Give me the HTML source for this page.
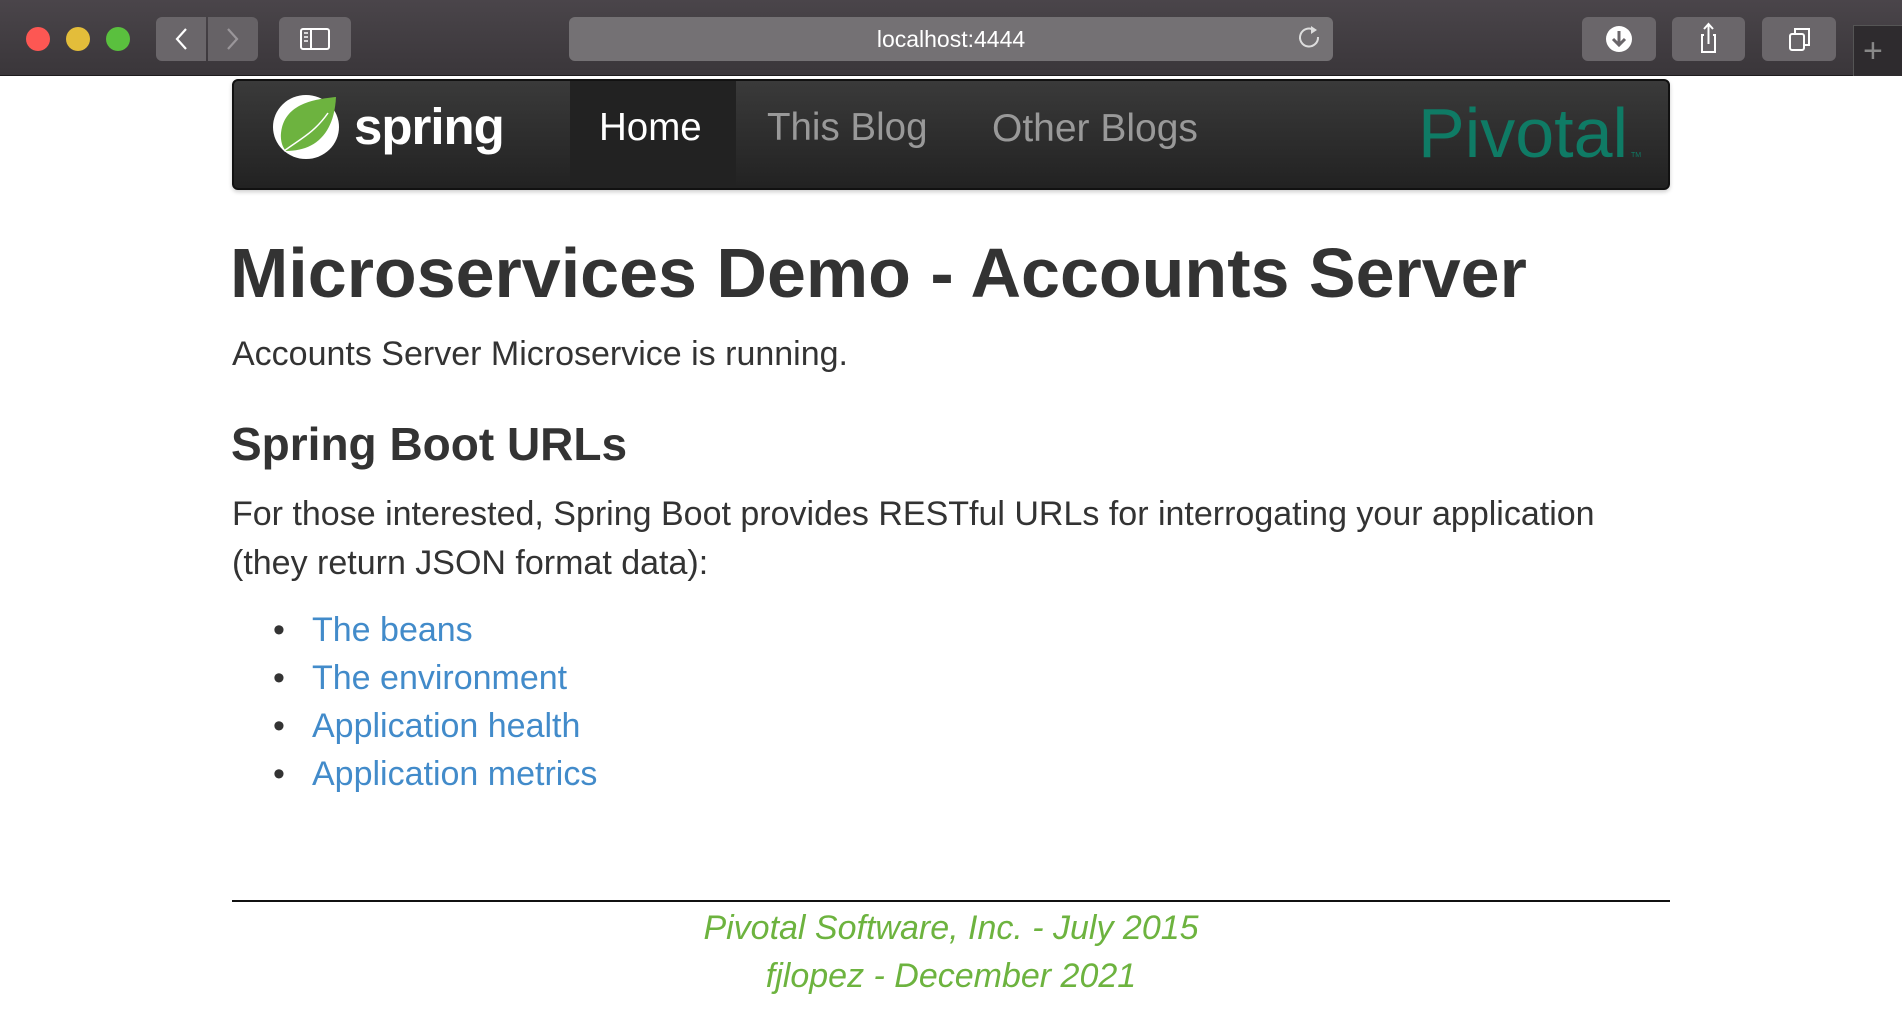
<!DOCTYPE html>
<html><head><meta charset="utf-8"><style>
*{margin:0;padding:0;box-sizing:border-box}
body{width:1902px;height:1014px;background:#fff;position:relative;overflow:hidden;font-family:"Liberation Sans",Arial,sans-serif;color:#333}
.a{position:absolute;white-space:nowrap;line-height:1}
.tb{position:absolute;left:0;top:0;width:1902px;height:76px;background:linear-gradient(#4a454a,#3a363a);border-bottom:1px solid #1e1c1e}
.dot{position:absolute;top:27px;width:24px;height:24px;border-radius:50%}
.btn{position:absolute;top:17px;height:44px;background:#6a666a;border-radius:6px}
.nav{position:absolute;left:232px;top:79px;width:1438px;height:111px;background:linear-gradient(#3a3a3a,#222);border:2px solid #111;border-radius:6px;box-shadow:0 2px 4px rgba(0,0,0,.2)}
.link{color:#428bca}
.foot{color:#6db33f;font-style:italic;font-size:34px;width:1902px;text-align:center;left:0}
</style></head><body>
<div class="tb">
  <div class="dot" style="left:26px;background:#fd5753"></div>
  <div class="dot" style="left:66px;background:#e3bd3a"></div>
  <div class="dot" style="left:106px;background:#5ac03e"></div>
  <div class="btn" style="left:156px;width:50px;border-radius:6px 0 0 6px"></div>
  <div class="btn" style="left:208px;width:50px;border-radius:0 6px 6px 0;background:#666266"></div>
  <svg class="a" style="left:156px;top:17px" width="102" height="44"><path d="M30 12 L21 22 L30 32" stroke="#fff" stroke-width="2.2" fill="none"/><path d="M72 12 L81 22 L72 32" stroke="#9a969a" stroke-width="2.2" fill="none"/></svg>
  <div class="btn" style="left:279px;width:72px"></div>
  <svg class="a" style="left:279px;top:17px" width="72" height="44"><rect x="22" y="12" width="28" height="20" rx="2" stroke="#fff" stroke-width="2" fill="none"/><line x1="32" y1="12" x2="32" y2="32" stroke="#fff" stroke-width="2"/><line x1="25" y1="16" x2="29" y2="16" stroke="#fff" stroke-width="1.5"/><line x1="25" y1="20" x2="29" y2="20" stroke="#fff" stroke-width="1.5"/><line x1="25" y1="24" x2="29" y2="24" stroke="#fff" stroke-width="1.5"/></svg>
  <div class="btn" style="left:569px;width:764px;background:#747174"></div>
  <div class="a" style="left:569px;width:764px;text-align:center;top:28px;font-size:23px;color:#fff">localhost:4444</div>
  <svg class="a" style="left:1295px;top:22px" width="30" height="30"><path d="M19 8 A9 9 0 1 0 23 15" stroke="#ddd" stroke-width="2" fill="none"/><path d="M16 4 L22 8 L16 12 Z" fill="#ddd"/></svg>
  <div class="btn" style="left:1582px;width:74px"></div>
  <svg class="a" style="left:1582px;top:17px" width="74" height="44"><circle cx="37" cy="22" r="13" fill="#fff"/><path d="M37 14 V28 M31 22 L37 28 L43 22" stroke="#6a666a" stroke-width="3" fill="none"/></svg>
  <div class="btn" style="left:1672px;width:73px"></div>
  <svg class="a" style="left:1672px;top:17px" width="73" height="44"><path d="M32 18 H30 V35 H43 V18 H41 M36.5 27 V8 M32 12 L36.5 7 L41 12" stroke="#fff" stroke-width="2" fill="none"/></svg>
  <div class="btn" style="left:1762px;width:74px"></div>
  <svg class="a" style="left:1762px;top:17px" width="74" height="44"><rect x="28" y="17" width="14" height="16" rx="2" stroke="#fff" stroke-width="2" fill="none"/><path d="M33 17 V12 H47 V28 H42" stroke="#fff" stroke-width="2" fill="none"/></svg>
  <div style="position:absolute;left:1853px;top:25px;width:49px;height:51px;background:#2e2b2e;border-left:1px solid #555;border-top:1px solid #555"></div>
  <div class="a" style="left:1863px;top:34px;font-size:34px;color:#888;font-weight:100">+</div>
</div>
<div class="nav">
  <div style="position:absolute;left:336px;top:0;width:166px;height:107px;background:#222"></div>
</div>
<svg class="a" style="left:272px;top:93px" width="72" height="68" viewBox="0 0 72 68">
  <ellipse cx="34" cy="34" rx="33" ry="32" fill="#fff"/>
  <path d="M64 4 C44 6 12 10 9 40 C8 50 12 56 14 58 C40 58 62 44 64 4 Z" fill="#6db33f"/>
  <path d="M12 58 C28 46 42 40 56 20" stroke="#fff" stroke-width="1.5" fill="none"/>
</svg>
<div class="a" style="left:354px;top:101px;font-size:51px;color:#fff;font-weight:bold;letter-spacing:-1px">spring</div>
<div class="a" style="left:599px;top:109px;font-size:38.5px;color:#fff">Home</div>
<div class="a" style="left:767px;top:109px;font-size:38.5px;color:#999">This Blog</div>
<div class="a" style="left:992px;top:109px;font-size:39px;color:#999">Other Blogs</div>
<div class="a" style="left:1418px;top:98px;font-size:70px;color:#0f7b65">Pivotal</div>
<div class="a" style="left:1631px;top:152px;font-size:7px;color:#0f7b65">TM</div>

<div class="a" style="left:230px;top:238px;font-size:70px;font-weight:bold">Microservices Demo - Accounts Server</div>
<div class="a" style="left:232px;top:337px;font-size:34px">Accounts Server Microservice is running.</div>
<div class="a" style="left:231px;top:421px;font-size:46px;font-weight:bold">Spring Boot URLs</div>
<div class="a" style="left:232px;top:497px;font-size:34px">For those interested, Spring Boot provides RESTful URLs for interrogating your application</div>
<div class="a" style="left:232px;top:546px;font-size:34px">(they return JSON format data):</div>
<div class="a" style="left:273px;top:616px;font-size:34px;line-height:48px">
<div style="position:relative;top:-10px">
<div><span style="display:inline-block;width:39px">•</span><span class="link">The beans</span></div>
<div><span style="display:inline-block;width:39px">•</span><span class="link">The environment</span></div>
<div><span style="display:inline-block;width:39px">•</span><span class="link">Application health</span></div>
<div><span style="display:inline-block;width:39px">•</span><span class="link">Application metrics</span></div>
</div></div>
<div style="position:absolute;left:232px;top:900px;width:1438px;height:2px;background:#111"></div>
<div class="a foot" style="top:911px">Pivotal Software, Inc. - July 2015</div>
<div class="a foot" style="top:959px">fjlopez - December 2021</div>
</body></html>
